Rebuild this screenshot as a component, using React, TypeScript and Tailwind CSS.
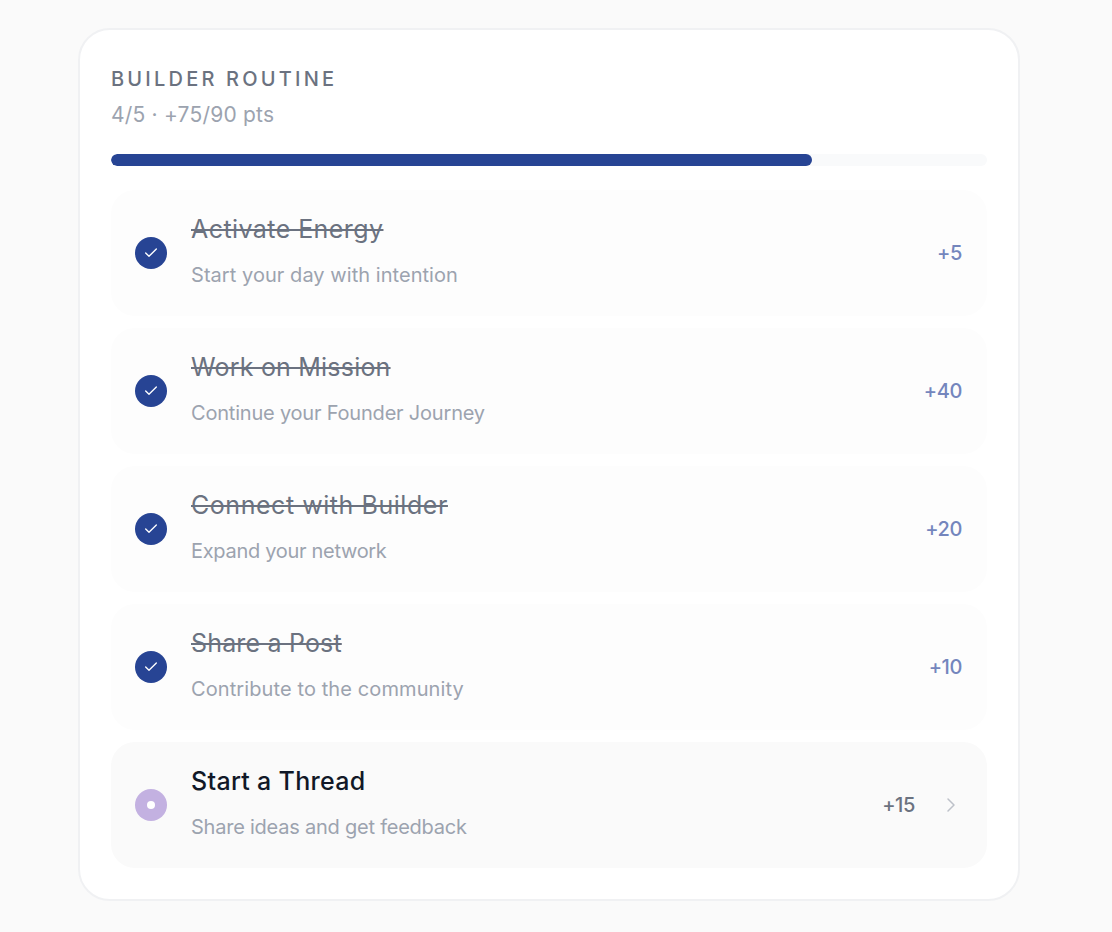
import { Check, ChevronRight } from "lucide-react";

const rows = [
  { title: "Activate Energy", sub: "Start your day with intention", pts: "+5", tt: "tracking-[0.43px]", st: "tracking-[0.05px]" },
  { title: "Work on Mission", sub: "Continue your Founder Journey", pts: "+40", tt: "tracking-[0.2px]", st: "tracking-[-0.2px]" },
  { title: "Connect with Builder", sub: "Expand your network", pts: "+20", tt: "tracking-[0.55px]", st: "tracking-[-0.3px]" },
  { title: "Share a Post", sub: "Contribute to the community", pts: "+10", tt: "tracking-[0.17px]", st: "tracking-[0.1px]" },
];

export default function App() {
  return (
    <div className="min-h-[932px] bg-[#fafafa] pt-[28px] pl-[78px] font-['Inter',sans-serif]">
      <div className="w-[942px] h-[873px] rounded-[32px] border-2 border-[#f0f1f3] bg-white p-[31px]">
        <h2 className="text-[20px] leading-[28px] mt-[4px] font-medium tracking-[3.2px] text-[#6b7280] whitespace-nowrap">BUILDER ROUTINE</h2>
        <p className="mt-[8px] text-[21px] leading-[28px] tracking-[0.2px] text-[#9ca3af]">4/5 · +75/90 pts</p>
        <div className="mt-[25px] h-3 rounded-full bg-[#f9fafb] overflow-hidden">
          <div className="h-full w-[80%] rounded-full bg-[#274494]" />
        </div>
        <div className="mt-6 flex flex-col gap-3">
          {rows.map((r) => (
            <div key={r.title} className="flex h-[126px] items-center rounded-[24px] bg-[#fdfdfd] pl-6 pr-[25px]">
              <div className="flex h-8 w-8 shrink-0 items-center justify-center rounded-full bg-[#274494]">
                <Check className="h-4 w-4 text-white" strokeWidth={2} />
              </div>
              <div className="ml-6 mb-[4px] flex-1">
                <div className={"text-[25px] leading-[32px] text-[#6b7280] line-through " + r.tt}>{r.title}</div>
                <div className={"mt-[16px] text-[20px] leading-[28px] text-[#9ca3af] " + r.st}>{r.sub}</div>
              </div>
              <div className="text-[20px] font-medium tracking-[-0.4px] text-[#7486bd]">{r.pts}</div>
            </div>
          ))}
          <div className="flex h-[126px] items-center rounded-[24px] bg-[#fafafa] pl-6 pr-6">
            <div className="flex h-8 w-8 shrink-0 items-center justify-center rounded-full bg-[#c3b1e1]">
              <div className="h-2 w-2 rounded-full bg-white" />
            </div>
            <div className="ml-6 mb-[4px] flex-1">
              <div className="text-[25px] leading-[32px] tracking-[0.3px] font-medium text-[#111827]">Start a Thread</div>
              <div className="mt-[16px] text-[20px] leading-[28px] tracking-[-0.23px] text-[#9ca3af]">Share ideas and get feedback</div>
            </div>
            <div className="text-[20px] font-medium tracking-[-0.4px] text-[#6b7280]">+15</div>
            <ChevronRight className="ml-6 h-6 w-6 text-[#bdc1c9]" strokeWidth={1.5} />
          </div>
        </div>
      </div>
    </div>
  );
}
